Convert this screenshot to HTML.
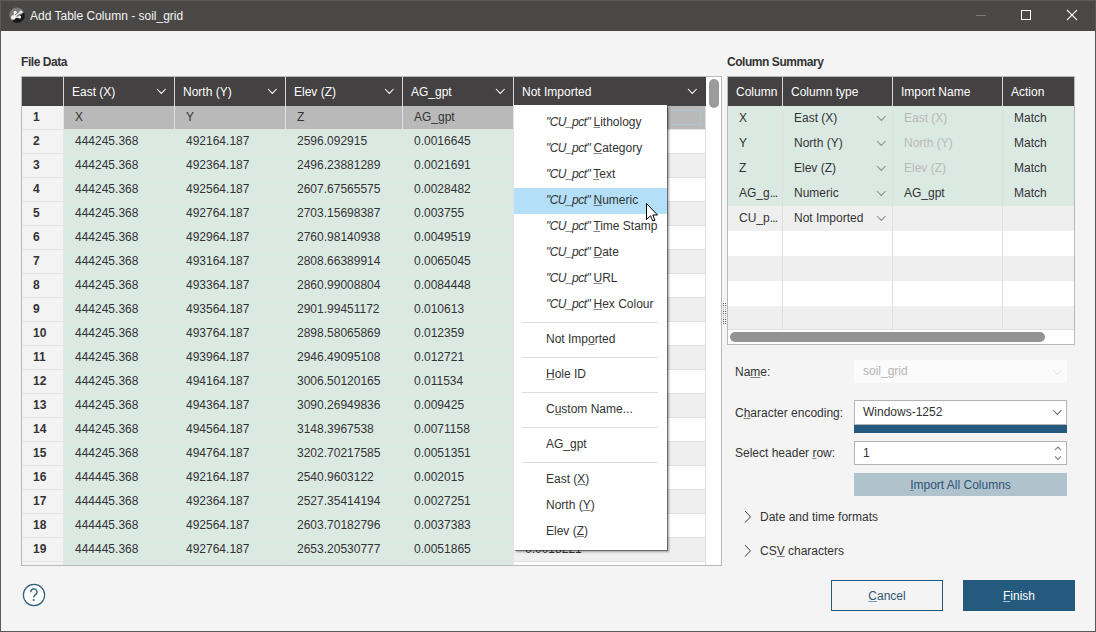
<!DOCTYPE html><html><head><meta charset="utf-8"><style>
*{margin:0;padding:0;box-sizing:border-box}
html,body{width:1096px;height:632px;overflow:hidden}
body{position:relative;background:#5a5856;font-family:"Liberation Sans",sans-serif;font-size:12px;color:#333}
.a{position:absolute}
.t{position:absolute;white-space:nowrap;line-height:14px}
.u{text-decoration:underline;text-underline-offset:1px;text-decoration-thickness:1px;text-decoration-color:color-mix(in srgb,currentColor 60%,transparent)}
</style></head><body>

<div class="a" style="left:0;top:0;width:1096px;height:1px;background:#5c5a58"></div>
<div class="a" style="left:0;top:0;width:1px;height:632px;background:#5c5a58"></div>
<div class="a" style="left:1px;top:1px;width:1094px;height:30px;background:#4a4847"></div>
<div class="a" style="left:1px;top:31px;width:1094px;height:600px;background:#f4f4f4"></div>
<svg class="a" style="left:9px;top:7px" width="17" height="17" viewBox="0 0 17 17">
<circle cx="7.8" cy="8" r="7.6" fill="#7a7877"/>
<path d="M3.0 13.9 A7.6 7.6 0 0 0 15.2 5.6 Z" fill="#1b1a1a"/>
<path d="M4.3 10.4 L6.2 5.3 M4.3 10.4 L11.9 5 M4.3 10.4 L10.6 10.1" stroke="#f0f0f0" stroke-width="1.2"/>
<circle cx="6.2" cy="5.3" r="1.6" fill="#f4f4f4"/><circle cx="11.9" cy="5" r="1.6" fill="#f4f4f4"/>
<circle cx="4.3" cy="10.4" r="2.2" fill="#f4f4f4"/><circle cx="10.6" cy="10.1" r="1.5" fill="#f4f4f4"/>
</svg>
<div class="t" style="left:30px;top:8px;font-size:12px;color:#f2f2f2;line-height:16px">Add Table Column - soil_grid</div>
<div class="a" style="left:976px;top:15px;width:10px;height:1px;background:#7c7a79"></div>
<div class="a" style="left:1021px;top:10px;width:10px;height:10px;border:1px solid #fff"></div>
<svg class="a" style="left:1066px;top:9px" width="12" height="12"><path d="M1 1 L11 11 M11 1 L1 11" stroke="#fff" stroke-width="1.1"/></svg>
<div class="t" style="left:21px;top:55px;font-weight:bold;letter-spacing:-0.45px">File Data</div>
<div class="t" style="left:727px;top:55px;font-weight:bold;letter-spacing:-0.45px">Column Summary</div>
<div class="a" style="left:21px;top:76px;width:701px;height:490px;border:1px solid #b9b9b9;background:#fff;overflow:hidden">
<div class="a" style="left:0;top:0;width:684px;height:29px;background:#434142"></div>
<div class="a" style="left:41px;top:0;width:1px;height:29px;background:#d8d8d8"></div>
<div class="t" style="left:50px;top:8px;color:#fff">East (X)</div>
<svg style="position:absolute;left:133.7px;top:11.3px" width="10.6" height="6.4"><path d="M1 1 L5.3 5.4 L9.6 1" fill="none" stroke="#ffffff" stroke-width="1.05"/></svg>
<div class="a" style="left:152px;top:0;width:1px;height:29px;background:#d8d8d8"></div>
<div class="t" style="left:161px;top:8px;color:#fff">North (Y)</div>
<svg style="position:absolute;left:244.7px;top:11.3px" width="10.6" height="6.4"><path d="M1 1 L5.3 5.4 L9.6 1" fill="none" stroke="#ffffff" stroke-width="1.05"/></svg>
<div class="a" style="left:263px;top:0;width:1px;height:29px;background:#d8d8d8"></div>
<div class="t" style="left:272px;top:8px;color:#fff">Elev (Z)</div>
<svg style="position:absolute;left:361.7px;top:11.3px" width="10.6" height="6.4"><path d="M1 1 L5.3 5.4 L9.6 1" fill="none" stroke="#ffffff" stroke-width="1.05"/></svg>
<div class="a" style="left:380px;top:0;width:1px;height:29px;background:#d8d8d8"></div>
<div class="t" style="left:389px;top:8px;color:#fff">AG_gpt</div>
<svg style="position:absolute;left:472.7px;top:11.3px" width="10.6" height="6.4"><path d="M1 1 L5.3 5.4 L9.6 1" fill="none" stroke="#ffffff" stroke-width="1.05"/></svg>
<div class="a" style="left:491px;top:0;width:1px;height:29px;background:#d8d8d8"></div>
<div class="t" style="left:500px;top:8px;color:#fff">Not Imported</div>
<svg style="position:absolute;left:664.7px;top:11.3px" width="10.6" height="6.4"><path d="M1 1 L5.3 5.4 L9.6 1" fill="none" stroke="#ffffff" stroke-width="1.05"/></svg>
<div class="a" style="left:0;top:29px;width:41px;height:470px;background:#f3f3f3"></div>
<div class="a" style="left:42px;top:29px;width:450px;height:470px;background:#dbe9e3"></div>
<div class="a" style="left:42px;top:29px;width:642px;height:24px;background:#b9b9b9"></div>
<div class="a" style="left:492px;top:53px;width:192px;height:24px;background:#ffffff"></div>
<div class="a" style="left:492px;top:77px;width:192px;height:24px;background:#efefef"></div>
<div class="a" style="left:492px;top:101px;width:192px;height:24px;background:#ffffff"></div>
<div class="a" style="left:492px;top:125px;width:192px;height:24px;background:#efefef"></div>
<div class="a" style="left:492px;top:149px;width:192px;height:24px;background:#ffffff"></div>
<div class="a" style="left:492px;top:173px;width:192px;height:24px;background:#efefef"></div>
<div class="a" style="left:492px;top:197px;width:192px;height:24px;background:#ffffff"></div>
<div class="a" style="left:492px;top:221px;width:192px;height:24px;background:#efefef"></div>
<div class="a" style="left:492px;top:245px;width:192px;height:24px;background:#ffffff"></div>
<div class="a" style="left:492px;top:269px;width:192px;height:24px;background:#efefef"></div>
<div class="a" style="left:492px;top:293px;width:192px;height:24px;background:#ffffff"></div>
<div class="a" style="left:492px;top:317px;width:192px;height:24px;background:#efefef"></div>
<div class="a" style="left:492px;top:341px;width:192px;height:24px;background:#ffffff"></div>
<div class="a" style="left:492px;top:365px;width:192px;height:24px;background:#efefef"></div>
<div class="a" style="left:492px;top:389px;width:192px;height:24px;background:#ffffff"></div>
<div class="a" style="left:492px;top:413px;width:192px;height:24px;background:#efefef"></div>
<div class="a" style="left:492px;top:437px;width:192px;height:24px;background:#ffffff"></div>
<div class="a" style="left:492px;top:461px;width:192px;height:24px;background:#efefef"></div>
<div class="a" style="left:492px;top:485px;width:192px;height:24px;background:#ffffff"></div>
<div class="a" style="left:0;top:52px;width:41px;height:1px;background:#e3e3e3"></div>
<div class="a" style="left:42px;top:52px;width:450px;height:1px;background:#e0e3e1"></div>
<div class="a" style="left:492px;top:52px;width:192px;height:1px;background:#e2e2e2"></div>
<div class="a" style="left:0;top:76px;width:41px;height:1px;background:#e3e3e3"></div>
<div class="a" style="left:42px;top:76px;width:450px;height:1px;background:#e0e3e1"></div>
<div class="a" style="left:492px;top:76px;width:192px;height:1px;background:#e2e2e2"></div>
<div class="a" style="left:0;top:100px;width:41px;height:1px;background:#e3e3e3"></div>
<div class="a" style="left:42px;top:100px;width:450px;height:1px;background:#e0e3e1"></div>
<div class="a" style="left:492px;top:100px;width:192px;height:1px;background:#e2e2e2"></div>
<div class="a" style="left:0;top:124px;width:41px;height:1px;background:#e3e3e3"></div>
<div class="a" style="left:42px;top:124px;width:450px;height:1px;background:#e0e3e1"></div>
<div class="a" style="left:492px;top:124px;width:192px;height:1px;background:#e2e2e2"></div>
<div class="a" style="left:0;top:148px;width:41px;height:1px;background:#e3e3e3"></div>
<div class="a" style="left:42px;top:148px;width:450px;height:1px;background:#e0e3e1"></div>
<div class="a" style="left:492px;top:148px;width:192px;height:1px;background:#e2e2e2"></div>
<div class="a" style="left:0;top:172px;width:41px;height:1px;background:#e3e3e3"></div>
<div class="a" style="left:42px;top:172px;width:450px;height:1px;background:#e0e3e1"></div>
<div class="a" style="left:492px;top:172px;width:192px;height:1px;background:#e2e2e2"></div>
<div class="a" style="left:0;top:196px;width:41px;height:1px;background:#e3e3e3"></div>
<div class="a" style="left:42px;top:196px;width:450px;height:1px;background:#e0e3e1"></div>
<div class="a" style="left:492px;top:196px;width:192px;height:1px;background:#e2e2e2"></div>
<div class="a" style="left:0;top:220px;width:41px;height:1px;background:#e3e3e3"></div>
<div class="a" style="left:42px;top:220px;width:450px;height:1px;background:#e0e3e1"></div>
<div class="a" style="left:492px;top:220px;width:192px;height:1px;background:#e2e2e2"></div>
<div class="a" style="left:0;top:244px;width:41px;height:1px;background:#e3e3e3"></div>
<div class="a" style="left:42px;top:244px;width:450px;height:1px;background:#e0e3e1"></div>
<div class="a" style="left:492px;top:244px;width:192px;height:1px;background:#e2e2e2"></div>
<div class="a" style="left:0;top:268px;width:41px;height:1px;background:#e3e3e3"></div>
<div class="a" style="left:42px;top:268px;width:450px;height:1px;background:#e0e3e1"></div>
<div class="a" style="left:492px;top:268px;width:192px;height:1px;background:#e2e2e2"></div>
<div class="a" style="left:0;top:292px;width:41px;height:1px;background:#e3e3e3"></div>
<div class="a" style="left:42px;top:292px;width:450px;height:1px;background:#e0e3e1"></div>
<div class="a" style="left:492px;top:292px;width:192px;height:1px;background:#e2e2e2"></div>
<div class="a" style="left:0;top:316px;width:41px;height:1px;background:#e3e3e3"></div>
<div class="a" style="left:42px;top:316px;width:450px;height:1px;background:#e0e3e1"></div>
<div class="a" style="left:492px;top:316px;width:192px;height:1px;background:#e2e2e2"></div>
<div class="a" style="left:0;top:340px;width:41px;height:1px;background:#e3e3e3"></div>
<div class="a" style="left:42px;top:340px;width:450px;height:1px;background:#e0e3e1"></div>
<div class="a" style="left:492px;top:340px;width:192px;height:1px;background:#e2e2e2"></div>
<div class="a" style="left:0;top:364px;width:41px;height:1px;background:#e3e3e3"></div>
<div class="a" style="left:42px;top:364px;width:450px;height:1px;background:#e0e3e1"></div>
<div class="a" style="left:492px;top:364px;width:192px;height:1px;background:#e2e2e2"></div>
<div class="a" style="left:0;top:388px;width:41px;height:1px;background:#e3e3e3"></div>
<div class="a" style="left:42px;top:388px;width:450px;height:1px;background:#e0e3e1"></div>
<div class="a" style="left:492px;top:388px;width:192px;height:1px;background:#e2e2e2"></div>
<div class="a" style="left:0;top:412px;width:41px;height:1px;background:#e3e3e3"></div>
<div class="a" style="left:42px;top:412px;width:450px;height:1px;background:#e0e3e1"></div>
<div class="a" style="left:492px;top:412px;width:192px;height:1px;background:#e2e2e2"></div>
<div class="a" style="left:0;top:436px;width:41px;height:1px;background:#e3e3e3"></div>
<div class="a" style="left:42px;top:436px;width:450px;height:1px;background:#e0e3e1"></div>
<div class="a" style="left:492px;top:436px;width:192px;height:1px;background:#e2e2e2"></div>
<div class="a" style="left:0;top:460px;width:41px;height:1px;background:#e3e3e3"></div>
<div class="a" style="left:42px;top:460px;width:450px;height:1px;background:#e0e3e1"></div>
<div class="a" style="left:492px;top:460px;width:192px;height:1px;background:#e2e2e2"></div>
<div class="a" style="left:0;top:484px;width:41px;height:1px;background:#e3e3e3"></div>
<div class="a" style="left:42px;top:484px;width:450px;height:1px;background:#e0e3e1"></div>
<div class="a" style="left:492px;top:484px;width:192px;height:1px;background:#e2e2e2"></div>
<div class="a" style="left:0;top:508px;width:41px;height:1px;background:#e3e3e3"></div>
<div class="a" style="left:42px;top:508px;width:450px;height:1px;background:#e0e3e1"></div>
<div class="a" style="left:492px;top:508px;width:192px;height:1px;background:#e2e2e2"></div>
<div class="a" style="left:41px;top:29px;width:1px;height:470px;background:#e6e6e6"></div>
<div class="a" style="left:152px;top:29px;width:1px;height:470px;background:#e0e3e1"></div>
<div class="a" style="left:263px;top:29px;width:1px;height:470px;background:#e0e3e1"></div>
<div class="a" style="left:380px;top:29px;width:1px;height:470px;background:#e0e3e1"></div>
<div class="a" style="left:491px;top:29px;width:1px;height:470px;background:#e0e3e1"></div>
<div class="a" style="left:683px;top:29px;width:1px;height:470px;background:#dedede"></div>
<div class="t" style="left:11px;top:33px;font-weight:bold">1</div>
<div class="t" style="left:11px;top:57px;font-weight:bold">2</div>
<div class="t" style="left:11px;top:81px;font-weight:bold">3</div>
<div class="t" style="left:11px;top:105px;font-weight:bold">4</div>
<div class="t" style="left:11px;top:129px;font-weight:bold">5</div>
<div class="t" style="left:11px;top:153px;font-weight:bold">6</div>
<div class="t" style="left:11px;top:177px;font-weight:bold">7</div>
<div class="t" style="left:11px;top:201px;font-weight:bold">8</div>
<div class="t" style="left:11px;top:225px;font-weight:bold">9</div>
<div class="t" style="left:11px;top:249px;font-weight:bold">10</div>
<div class="t" style="left:11px;top:273px;font-weight:bold">11</div>
<div class="t" style="left:11px;top:297px;font-weight:bold">12</div>
<div class="t" style="left:11px;top:321px;font-weight:bold">13</div>
<div class="t" style="left:11px;top:345px;font-weight:bold">14</div>
<div class="t" style="left:11px;top:369px;font-weight:bold">15</div>
<div class="t" style="left:11px;top:393px;font-weight:bold">16</div>
<div class="t" style="left:11px;top:417px;font-weight:bold">17</div>
<div class="t" style="left:11px;top:441px;font-weight:bold">18</div>
<div class="t" style="left:11px;top:465px;font-weight:bold">19</div>
<div class="t" style="left:11px;top:489px;font-weight:bold">20</div>
<div class="t" style="left:53px;top:33px">X</div>
<div class="t" style="left:164px;top:33px">Y</div>
<div class="t" style="left:275px;top:33px">Z</div>
<div class="t" style="left:392px;top:33px">AG_gpt</div>
<div class="t" style="left:503px;top:33px">CU_pct</div>
<div class="t" style="left:53px;top:57px">444245.368</div>
<div class="t" style="left:164px;top:57px">492164.187</div>
<div class="t" style="left:275px;top:57px">2596.092915</div>
<div class="t" style="left:392px;top:57px">0.0016645</div>
<div class="t" style="left:503px;top:57px">0.0018221</div>
<div class="t" style="left:53px;top:81px">444245.368</div>
<div class="t" style="left:164px;top:81px">492364.187</div>
<div class="t" style="left:275px;top:81px">2496.23881289</div>
<div class="t" style="left:392px;top:81px">0.0021691</div>
<div class="t" style="left:503px;top:81px">0.0018221</div>
<div class="t" style="left:53px;top:105px">444245.368</div>
<div class="t" style="left:164px;top:105px">492564.187</div>
<div class="t" style="left:275px;top:105px">2607.67565575</div>
<div class="t" style="left:392px;top:105px">0.0028482</div>
<div class="t" style="left:503px;top:105px">0.0018221</div>
<div class="t" style="left:53px;top:129px">444245.368</div>
<div class="t" style="left:164px;top:129px">492764.187</div>
<div class="t" style="left:275px;top:129px">2703.15698387</div>
<div class="t" style="left:392px;top:129px">0.003755</div>
<div class="t" style="left:503px;top:129px">0.0018221</div>
<div class="t" style="left:53px;top:153px">444245.368</div>
<div class="t" style="left:164px;top:153px">492964.187</div>
<div class="t" style="left:275px;top:153px">2760.98140938</div>
<div class="t" style="left:392px;top:153px">0.0049519</div>
<div class="t" style="left:503px;top:153px">0.0018221</div>
<div class="t" style="left:53px;top:177px">444245.368</div>
<div class="t" style="left:164px;top:177px">493164.187</div>
<div class="t" style="left:275px;top:177px">2808.66389914</div>
<div class="t" style="left:392px;top:177px">0.0065045</div>
<div class="t" style="left:503px;top:177px">0.0018221</div>
<div class="t" style="left:53px;top:201px">444245.368</div>
<div class="t" style="left:164px;top:201px">493364.187</div>
<div class="t" style="left:275px;top:201px">2860.99008804</div>
<div class="t" style="left:392px;top:201px">0.0084448</div>
<div class="t" style="left:503px;top:201px">0.0018221</div>
<div class="t" style="left:53px;top:225px">444245.368</div>
<div class="t" style="left:164px;top:225px">493564.187</div>
<div class="t" style="left:275px;top:225px">2901.99451172</div>
<div class="t" style="left:392px;top:225px">0.010613</div>
<div class="t" style="left:503px;top:225px">0.0018221</div>
<div class="t" style="left:53px;top:249px">444245.368</div>
<div class="t" style="left:164px;top:249px">493764.187</div>
<div class="t" style="left:275px;top:249px">2898.58065869</div>
<div class="t" style="left:392px;top:249px">0.012359</div>
<div class="t" style="left:503px;top:249px">0.0018221</div>
<div class="t" style="left:53px;top:273px">444245.368</div>
<div class="t" style="left:164px;top:273px">493964.187</div>
<div class="t" style="left:275px;top:273px">2946.49095108</div>
<div class="t" style="left:392px;top:273px">0.012721</div>
<div class="t" style="left:503px;top:273px">0.0018221</div>
<div class="t" style="left:53px;top:297px">444245.368</div>
<div class="t" style="left:164px;top:297px">494164.187</div>
<div class="t" style="left:275px;top:297px">3006.50120165</div>
<div class="t" style="left:392px;top:297px">0.011534</div>
<div class="t" style="left:503px;top:297px">0.0018221</div>
<div class="t" style="left:53px;top:321px">444245.368</div>
<div class="t" style="left:164px;top:321px">494364.187</div>
<div class="t" style="left:275px;top:321px">3090.26949836</div>
<div class="t" style="left:392px;top:321px">0.009425</div>
<div class="t" style="left:503px;top:321px">0.0018221</div>
<div class="t" style="left:53px;top:345px">444245.368</div>
<div class="t" style="left:164px;top:345px">494564.187</div>
<div class="t" style="left:275px;top:345px">3148.3967538</div>
<div class="t" style="left:392px;top:345px">0.0071158</div>
<div class="t" style="left:503px;top:345px">0.0018221</div>
<div class="t" style="left:53px;top:369px">444245.368</div>
<div class="t" style="left:164px;top:369px">494764.187</div>
<div class="t" style="left:275px;top:369px">3202.70217585</div>
<div class="t" style="left:392px;top:369px">0.0051351</div>
<div class="t" style="left:503px;top:369px">0.0018221</div>
<div class="t" style="left:53px;top:393px">444445.368</div>
<div class="t" style="left:164px;top:393px">492164.187</div>
<div class="t" style="left:275px;top:393px">2540.9603122</div>
<div class="t" style="left:392px;top:393px">0.002015</div>
<div class="t" style="left:503px;top:393px">0.0018221</div>
<div class="t" style="left:53px;top:417px">444445.368</div>
<div class="t" style="left:164px;top:417px">492364.187</div>
<div class="t" style="left:275px;top:417px">2527.35414194</div>
<div class="t" style="left:392px;top:417px">0.0027251</div>
<div class="t" style="left:503px;top:417px">0.0018221</div>
<div class="t" style="left:53px;top:441px">444445.368</div>
<div class="t" style="left:164px;top:441px">492564.187</div>
<div class="t" style="left:275px;top:441px">2603.70182796</div>
<div class="t" style="left:392px;top:441px">0.0037383</div>
<div class="t" style="left:503px;top:441px">0.0018221</div>
<div class="t" style="left:53px;top:465px">444445.368</div>
<div class="t" style="left:164px;top:465px">492764.187</div>
<div class="t" style="left:275px;top:465px">2653.20530777</div>
<div class="t" style="left:392px;top:465px">0.0051865</div>
<div class="t" style="left:503px;top:465px">0.0018221</div>
<div class="a" style="left:498px;top:33px;width:181px;height:15px;border:1px solid #a9c6d6"></div>
<div class="a" style="left:684px;top:0;width:15px;height:490px;background:#fff"></div>
<div class="a" style="left:687px;top:2px;width:10px;height:29px;border-radius:5px;background:#9b9b9b"></div>
</div>
<svg class="a" style="left:722px;top:302px" width="5" height="23"><rect x="1" y="1" width="1" height="1" fill="#555"/><rect x="3" y="1" width="1" height="1" fill="#555"/><rect x="1" y="3" width="1" height="1" fill="#555"/><rect x="3" y="3" width="1" height="1" fill="#555"/><rect x="1" y="5" width="1" height="1" fill="#aaa"/><rect x="3" y="5" width="1" height="1" fill="#aaa"/><rect x="1" y="7" width="1" height="1" fill="#aaa"/><rect x="3" y="7" width="1" height="1" fill="#aaa"/><rect x="1" y="9" width="1" height="1" fill="#555"/><rect x="3" y="9" width="1" height="1" fill="#555"/><rect x="1" y="11" width="1" height="1" fill="#555"/><rect x="3" y="11" width="1" height="1" fill="#555"/><rect x="1" y="13" width="1" height="1" fill="#aaa"/><rect x="3" y="13" width="1" height="1" fill="#aaa"/><rect x="1" y="15" width="1" height="1" fill="#aaa"/><rect x="3" y="15" width="1" height="1" fill="#aaa"/><rect x="1" y="17" width="1" height="1" fill="#555"/><rect x="3" y="17" width="1" height="1" fill="#555"/><rect x="1" y="19" width="1" height="1" fill="#555"/><rect x="3" y="19" width="1" height="1" fill="#555"/><rect x="1" y="21" width="1" height="1" fill="#555"/><rect x="3" y="21" width="1" height="1" fill="#555"/></svg>
<div class="a" style="left:514px;top:105px;width:153px;height:445px;background:#fff;box-shadow:1px 1px 0 rgba(0,0,0,0.35),2px 2px 2px rgba(0,0,0,0.35)"></div>
<div class="t" style="left:546px;top:115px"><i style="letter-spacing:-0.55px">"CU_pct"</i> <span class=u>L</span>ithology</div>
<div class="t" style="left:546px;top:141px"><i style="letter-spacing:-0.55px">"CU_pct"</i> <span class=u>C</span>ategory</div>
<div class="t" style="left:546px;top:167px"><i style="letter-spacing:-0.55px">"CU_pct"</i> <span class=u>T</span>ext</div>
<div class="a" style="left:514px;top:188px;width:153px;height:26px;background:#b3e0f8"></div>
<div class="t" style="left:546px;top:193px"><i style="letter-spacing:-0.55px">"CU_pct"</i> <span class=u>N</span>umeric</div>
<div class="t" style="left:546px;top:219px"><i style="letter-spacing:-0.55px">"CU_pct"</i> <span class=u>T</span>ime Stamp</div>
<div class="t" style="left:546px;top:245px"><i style="letter-spacing:-0.55px">"CU_pct"</i> <span class=u>D</span>ate</div>
<div class="t" style="left:546px;top:271px"><i style="letter-spacing:-0.55px">"CU_pct"</i> <span class=u>U</span>RL</div>
<div class="t" style="left:546px;top:297px"><i style="letter-spacing:-0.55px">"CU_pct"</i> <span class=u>H</span>ex Colour</div>
<div class="a" style="left:522px;top:322px;width:136px;height:1px;background:#dcdcdc"></div>
<div class="t" style="left:546px;top:332px">Not Imp<span class=u>o</span>rted</div>
<div class="a" style="left:522px;top:357px;width:136px;height:1px;background:#dcdcdc"></div>
<div class="t" style="left:546px;top:367px"><span class=u>H</span>ole ID</div>
<div class="a" style="left:522px;top:392px;width:136px;height:1px;background:#dcdcdc"></div>
<div class="t" style="left:546px;top:402px">C<span class=u>u</span>stom Name...</div>
<div class="a" style="left:522px;top:427px;width:136px;height:1px;background:#dcdcdc"></div>
<div class="t" style="left:546px;top:437px">AG_gpt</div>
<div class="a" style="left:522px;top:462px;width:136px;height:1px;background:#dcdcdc"></div>
<div class="t" style="left:546px;top:472px">East (<span class=u>X</span>)</div>
<div class="t" style="left:546px;top:498px">North (<span class=u>Y</span>)</div>
<div class="t" style="left:546px;top:524px">Elev (<span class=u>Z</span>)</div>
<svg class="a" style="left:645px;top:202px" width="14" height="21" viewBox="0 0 14 21">
<path d="M1.5 1.5 L1.5 17.5 L5.5 13.8 L7.8 19 L10 18.2 L7.8 13 L12.5 13 Z" fill="#fff" stroke="#000" stroke-width="1" stroke-linejoin="miter"/>
</svg>
<div class="a" style="left:727px;top:76px;width:348px;height:269px;border:1px solid #b9b9b9;background:#fff;overflow:hidden">
<div class="a" style="left:0;top:0;width:346px;height:29px;background:#434142"></div>
<div class="t" style="left:8px;top:8px;color:#fff">Column</div>
<div class="a" style="left:54px;top:0;width:1px;height:29px;background:#d8d8d8"></div>
<div class="t" style="left:63px;top:8px;color:#fff">Column type</div>
<div class="a" style="left:164px;top:0;width:1px;height:29px;background:#d8d8d8"></div>
<div class="t" style="left:173px;top:8px;color:#fff">Import Name</div>
<div class="a" style="left:274px;top:0;width:1px;height:29px;background:#d8d8d8"></div>
<div class="t" style="left:283px;top:8px;color:#fff">Action</div>
<div class="a" style="left:0;top:29px;width:346px;height:25px;background:#dbe9e3"></div>
<div class="a" style="left:0;top:54px;width:346px;height:25px;background:#dbe9e3"></div>
<div class="a" style="left:0;top:79px;width:346px;height:25px;background:#dbe9e3"></div>
<div class="a" style="left:0;top:104px;width:346px;height:25px;background:#dbe9e3"></div>
<div class="a" style="left:0;top:129px;width:346px;height:25px;background:#efefef"></div>
<div class="a" style="left:0;top:154px;width:346px;height:25px;background:#ffffff"></div>
<div class="a" style="left:0;top:179px;width:346px;height:25px;background:#efefef"></div>
<div class="a" style="left:0;top:204px;width:346px;height:25px;background:#ffffff"></div>
<div class="a" style="left:0;top:229px;width:346px;height:24px;background:#efefef"></div>
<div class="a" style="left:0;top:252px;width:346px;height:1px;background:#dedede"></div>
<div class="a" style="left:54px;top:29px;width:1px;height:224px;background:#dfdfdf"></div>
<div class="a" style="left:164px;top:29px;width:1px;height:224px;background:#dfdfdf"></div>
<div class="a" style="left:274px;top:29px;width:1px;height:224px;background:#dfdfdf"></div>
<div class="t" style="left:11px;top:34px">X</div>
<div class="t" style="left:66px;top:34px">East (X)</div>
<svg style="position:absolute;left:147.7px;top:38.3px" width="10.6" height="6.4"><path d="M1 1 L5.3 5.4 L9.6 1" fill="none" stroke="#8d8d8d" stroke-width="1.05"/></svg>
<div class="t" style="left:176px;top:34px;color:#b9b9b9">East (X)</div>
<div class="t" style="left:286px;top:34px">Match</div>
<div class="t" style="left:11px;top:59px">Y</div>
<div class="t" style="left:66px;top:59px">North (Y)</div>
<svg style="position:absolute;left:147.7px;top:63.3px" width="10.6" height="6.4"><path d="M1 1 L5.3 5.4 L9.6 1" fill="none" stroke="#8d8d8d" stroke-width="1.05"/></svg>
<div class="t" style="left:176px;top:59px;color:#b9b9b9">North (Y)</div>
<div class="t" style="left:286px;top:59px">Match</div>
<div class="t" style="left:11px;top:84px">Z</div>
<div class="t" style="left:66px;top:84px">Elev (Z)</div>
<svg style="position:absolute;left:147.7px;top:88.3px" width="10.6" height="6.4"><path d="M1 1 L5.3 5.4 L9.6 1" fill="none" stroke="#8d8d8d" stroke-width="1.05"/></svg>
<div class="t" style="left:176px;top:84px;color:#b9b9b9">Elev (Z)</div>
<div class="t" style="left:286px;top:84px">Match</div>
<div class="t" style="left:11px;top:109px">AG_g<span style=letter-spacing:-0.8px>...</span></div>
<div class="t" style="left:66px;top:109px">Numeric</div>
<svg style="position:absolute;left:147.7px;top:113.3px" width="10.6" height="6.4"><path d="M1 1 L5.3 5.4 L9.6 1" fill="none" stroke="#8d8d8d" stroke-width="1.05"/></svg>
<div class="t" style="left:176px;top:109px;color:#333">AG_gpt</div>
<div class="t" style="left:286px;top:109px">Match</div>
<div class="t" style="left:11px;top:134px">CU_p<span style=letter-spacing:-0.8px>...</span></div>
<div class="t" style="left:66px;top:134px">Not Imported</div>
<svg style="position:absolute;left:147.7px;top:138.3px" width="10.6" height="6.4"><path d="M1 1 L5.3 5.4 L9.6 1" fill="none" stroke="#8d8d8d" stroke-width="1.05"/></svg>
<div class="a" style="left:2px;top:255px;width:315px;height:10px;border-radius:5px;background:#939393"></div>
</div>
<div class="t" style="left:735px;top:365px">Na<span class=u>m</span>e:</div>
<div class="a" style="left:854px;top:360px;width:213px;height:23px;background:#fbfbfb"></div>
<div class="t" style="left:863px;top:364px;color:#b5b5b5">soil_grid</div>
<svg style="position:absolute;left:1051.7px;top:368.8px" width="10.6" height="6.4"><path d="M1 1 L5.3 5.4 L9.6 1" fill="none" stroke="#e6e6e6" stroke-width="1.05"/></svg>
<div class="t" style="left:735px;top:406px">C<span class=u>h</span>aracter encoding:</div>
<div class="a" style="left:854px;top:400px;width:213px;height:25px;border:1px solid #b4b4b4;background:#fff"></div>
<div class="t" style="left:863px;top:405px">Windows-1252</div>
<svg style="position:absolute;left:1051.7px;top:409.3px" width="10.6" height="6.4"><path d="M1 1 L5.3 5.4 L9.6 1" fill="none" stroke="#6b6b6b" stroke-width="1.05"/></svg>
<div class="a" style="left:854px;top:425px;width:213px;height:8px;background:#245a7e"></div>
<div class="t" style="left:735px;top:446px">Select header <span class=u>r</span>ow:</div>
<div class="a" style="left:854px;top:441px;width:213px;height:24px;border:1px solid #b4b4b4;background:#fff"></div>
<div class="t" style="left:863px;top:446px">1</div>
<svg class="a" style="left:1052px;top:444px" width="11" height="18"><path d="M3 6 L6 3 L9 6 M3 12.5 L6 15.5 L9 12.5" fill="none" stroke="#888" stroke-width="1.1"/></svg>
<div class="a" style="left:854px;top:473px;width:213px;height:23px;background:#b0c3cd"></div>
<div class="t" style="left:854px;width:213px;text-align:center;top:478px;color:#2c5474"><span class=u>I</span>mport All Columns</div>
<svg class="a" style="left:743px;top:510px" width="10" height="14"><path d="M2 1 L7.5 6.8 L2 12.6" fill="none" stroke="#3a3a3a" stroke-width="1"/></svg>
<div class="t" style="left:760px;top:510px">Date and time formats</div>
<svg class="a" style="left:743px;top:544px" width="10" height="14"><path d="M2 1 L7.5 6.8 L2 12.6" fill="none" stroke="#3a3a3a" stroke-width="1"/></svg>
<div class="t" style="left:760px;top:544px">CS<span class=u>V</span> characters</div>
<svg class="a" style="left:22px;top:583px" width="24" height="24"><circle cx="12" cy="12" r="10.6" fill="#fff" stroke="#2f5f80" stroke-width="1.2"/><path d="M8.8 9.2 A3.1 3.1 0 1 1 13.6 11.6 Q11.7 12.8 11.7 14.6" fill="none" stroke="#2f5f80" stroke-width="1.3"/><circle cx="11.6" cy="17" r="1" fill="#2f5f80"/></svg>
<div class="a" style="left:831px;top:580px;width:112px;height:31px;border:1px solid #245a7e;background:transparent"></div>
<div class="t" style="left:831px;width:112px;text-align:center;top:589px;color:#2c5474"><span class=u>C</span>ancel</div>
<div class="a" style="left:963px;top:580px;width:112px;height:31px;background:#245a7e"></div>
<div class="t" style="left:963px;width:112px;text-align:center;top:589px;color:#fff"><span class=u>F</span>inish</div>
</body></html>
